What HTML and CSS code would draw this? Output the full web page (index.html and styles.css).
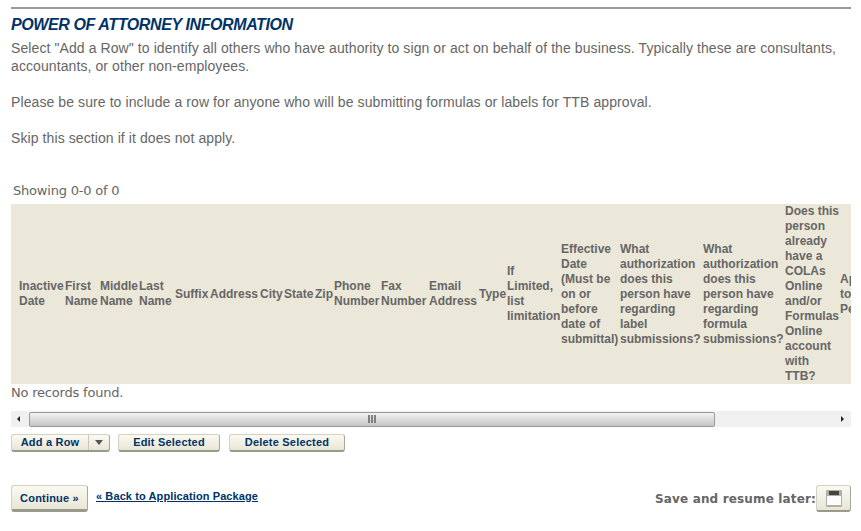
FILE: index.html
```html
<!DOCTYPE html>
<html lang="en">
    <head>
        <meta charset="UTF-8" />
        <meta name="viewport" content="width=device-width, initial-scale=1.0" />
        <title>Power of Attorney Information</title>
        <link rel="stylesheet" href="styles.css">
    </head>
    <body>
        <div class="page">
            <h2 class="section-title">POWER OF ATTORNEY INFORMATION</h2>
            <p class="intro">Select "Add a Row" to identify all others who have authority to sign or act on behalf of the business. Typically these are consultants, accountants, or other non-employees.</p>
            <p class="intro">Please be sure to include a row for anyone who will be submitting formulas or labels for TTB approval.</p>
            <p class="intro">Skip this section if it does not apply.</p>

            <div class="showing">Showing 0-0 of 0</div>

            <div class="table-wrap">
                <table class="grid">
                    <colgroup>
                        <col class="c54"><col class="c35"><col class="c39"><col class="c36"><col class="c35">
                        <col class="c50"><col class="c24"><col class="c31"><col class="c19"><col class="c47">
                        <col class="c48"><col class="c50"><col class="c28"><col class="c54"><col class="c59">
                        <col class="c83"><col class="c82"><col class="c55"><col class="c50">
                    </colgroup>
                    <thead>
                        <tr>
                            <th class="first">Inactive Date</th>
                            <th>First Name</th>
                            <th>Middle Name</th>
                            <th>Last Name</th>
                            <th>Suffix</th>
                            <th>Address</th>
                            <th>City</th>
                            <th>State</th>
                            <th>Zip</th>
                            <th>Phone Number</th>
                            <th>Fax Number</th>
                            <th>Email Address</th>
                            <th>Type</th>
                            <th>If Limited, list limitation</th>
                            <th>Effective Date (Must be on or before date of submittal)</th>
                            <th>What authorization does this person have regarding label submissions?</th>
                            <th>What authorization does this person have regarding formula submissions?</th>
                            <th>Does this person already have a COLAs Online and/or Formulas Online account with TTB?</th>
                            <th>Applies to this Person</th>
                        </tr>
                    </thead>
                </table>
            </div>
            <div class="no-records">No records found.</div>

            <div class="scrollbar">
                <span class="arrow arrow-left"></span>
                <div class="thumb"><span class="grip"></span></div>
                <span class="arrow arrow-right"></span>
            </div>

            <div class="row-actions">
                <div class="btn split">
                    <span class="split-label">Add a Row</span>
                    <span class="split-toggle"><span class="caret"></span></span>
                </div>
                <button class="btn btn-edit">Edit Selected</button>
                <button class="btn btn-delete">Delete Selected</button>
            </div>

            <div class="footer">
                <button class="btn btn-continue">Continue »</button>
                <a class="back-link" href="#">« Back to Application Package</a>
                <div class="save">
                    <span class="save-label">Save and resume later:</span>
                    <button class="btn btn-save">
                        <svg width="16" height="17" viewBox="0 0 16 17">
                            <rect x="0" y="0" width="16" height="17" rx="1" fill="#b0b0a9"/>
                            <rect x="3" y="1" width="10" height="4" fill="#444"/>
                            <rect x="1" y="6" width="14" height="9" fill="#fcfcfc"/>
                        </svg>
                    </button>
                </div>
            </div>
        </div>
    </body>
</html>
```

FILE: styles.css
```css
html,
body {
    margin: 0;
    padding: 0;
    background: #fff;
}

body {
    font-family: "Liberation Sans", Arial, sans-serif;
    color: #666;
}

.page {
    width: 840px;
    margin-left: 11px;
    padding-top: 7px;
}

.section-title {
    margin: 0;
    border-top: 2px solid #999;
    padding-top: 7px;
    font-size: 16px;
    line-height: 18px;
    letter-spacing: -0.4px;
    font-style: italic;
    font-weight: bold;
    color: #003366;
}

.intro {
    margin: 5px 0 18px;
    font-size: 14px;
    line-height: 18px;
    letter-spacing: 0.09px;
}

.intro + .intro {
    margin-top: 0;
}

.showing {
    margin: 34px 0 0 2px;
    font-family: "DejaVu Sans", Verdana, sans-serif;
    font-size: 13px;
    line-height: 20px;
    letter-spacing: -0.2px;
}

.table-wrap {
    overflow: hidden;
    width: 840px;
    margin-top: 3px;
    background: #ece8d9;
}

.grid {
    table-layout: fixed;
    width: 879px;
    border-collapse: collapse;
}

.c19 { width: 19px; }
.c24 { width: 24px; }
.c28 { width: 28px; }
.c31 { width: 31px; }
.c35 { width: 35px; }
.c36 { width: 36px; }
.c39 { width: 39px; }
.c47 { width: 47px; }
.c48 { width: 48px; }
.c50 { width: 50px; }
.c54 { width: 54px; }
.c55 { width: 55px; }
.c59 { width: 59px; }
.c82 { width: 82px; }
.c83 { width: 83px; }

.grid th {
    padding: 0;
    font-size: 12px;
    line-height: 15px;
    font-weight: bold;
    text-align: left;
    vertical-align: middle;
    color: #666;
    overflow: hidden;
}

.grid th.first {
    padding-left: 8px;
}

.no-records {
    font-family: "DejaVu Sans", Verdana, sans-serif;
    font-size: 13px;
    line-height: 17px;
    letter-spacing: -0.2px;
}

.scrollbar {
    display: flex;
    align-items: center;
    height: 16px;
    margin-top: 10px;
    background: #f0f0f0;
}

.arrow {
    flex: none;
    width: 18px;
    display: flex;
    justify-content: center;
}

.arrow::before {
    content: "";
    border-top: 3px solid transparent;
    border-bottom: 3px solid transparent;
}

.arrow-left {
    padding-right: 3px;
    width: 15px;
}

.arrow-left::before {
    border-right: 3px solid #222;
}

.arrow-right::before {
    border-left: 3px solid #222;
}

.thumb {
    display: flex;
    align-items: center;
    justify-content: center;
    box-sizing: border-box;
    width: 686px;
    height: 15px;
    border: 1px solid #999;
    border-radius: 2px;
    background: linear-gradient(#f2f2f2, #d2d2d2 70%, #c4c4c4);
}

.grip {
    width: 8px;
    height: 8px;
    background: repeating-linear-gradient(90deg, #808080 0, #808080 2px, transparent 2px, transparent 3px);
}

.arrow-right {
    margin-left: auto;
}

.row-actions {
    display: flex;
    gap: 8px;
    margin-top: 7px;
}

.btn {
    box-sizing: border-box;
    margin: 0;
    padding: 0;
    border: 1px solid #d4d2c4;
    border-bottom: 2px solid #9a9a8c;
    border-right-color: #a8a89a;
    border-radius: 3px;
    background: linear-gradient(#fbfaf2, #e9e6d6);
    font-family: "Liberation Sans", Arial, sans-serif;
    font-size: 11px;
    font-weight: bold;
    letter-spacing: 0.2px;
    color: #003366;
}

.row-actions .btn {
    height: 18px;
    line-height: 15px;
}

.split {
    display: flex;
    width: 99px;
}

.split-label {
    width: 76px;
    text-align: center;
    border-right: 1px solid #c9c7b8;
}

.split-toggle {
    flex: 1;
    display: flex;
    align-items: center;
    justify-content: center;
}

.caret {
    border-left: 4px solid transparent;
    border-right: 4px solid transparent;
    border-top: 5px solid #555;
}

.btn-edit {
    width: 102px;
}

.row-actions .btn-delete {
    width: 116px;
    margin-left: 1px;
}

.footer {
    display: flex;
    align-items: flex-start;
    margin-top: 33px;
}

.btn-continue {
    width: 77px;
    height: 27px;
    border-bottom-width: 3px;
}

.back-link {
    margin: 4px 0 0 8px;
    font-size: 11px;
    font-weight: bold;
    line-height: 14px;
    letter-spacing: 0.1px;
    color: #003366;
}

.save {
    display: flex;
    align-items: center;
    margin-left: auto;
}

.save-label {
    font-family: "DejaVu Sans", Verdana, sans-serif;
    font-size: 12px;
    font-weight: bold;
    letter-spacing: 0.15px;
}

.btn-save {
    display: flex;
    align-items: center;
    justify-content: center;
    width: 35px;
    height: 27px;
}
```
